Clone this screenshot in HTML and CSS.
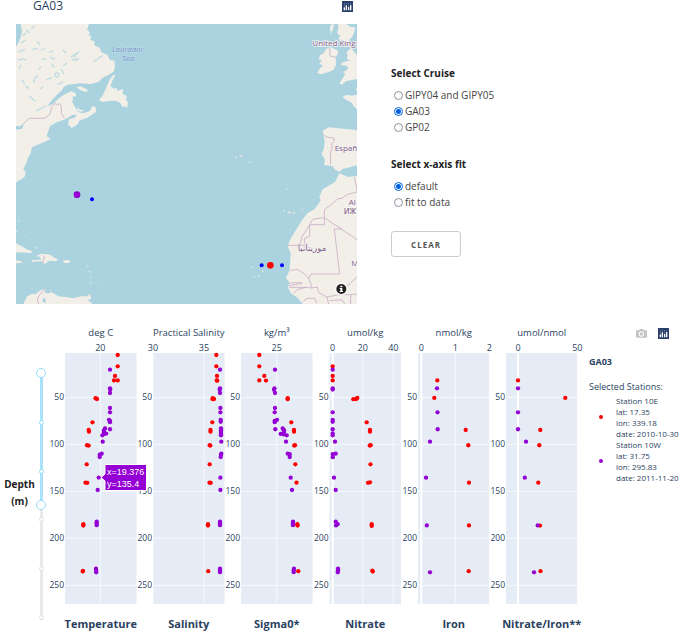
FILE: index.html
```html
<!DOCTYPE html>
<html lang="en">
<head>
<meta charset="utf-8">
<title>GA03</title>
<link rel="stylesheet" href="styles.css">
</head>
<body>
<svg class="defs" aria-hidden="true">
  <symbol id="logo" viewBox="0 0 33 33">
    <rect width="33" height="33" rx="1" fill="#2a3f6a"/>
    <g fill="#7d9cc4"><circle cx="7" cy="8" r="1.6"/><circle cx="13" cy="8" r="1.6"/><circle cx="19" cy="8" r="1.6"/><circle cx="25" cy="8" r="1.6"/><circle cx="7" cy="14" r="1.6"/><circle cx="19" cy="14" r="1.6"/></g>
    <g fill="#fff"><rect x="5" y="19" width="4" height="9" rx="1"/><rect x="11" y="13" width="4" height="15" rx="1"/><rect x="18" y="18" width="4" height="10" rx="1"/><rect x="24" y="12" width="4" height="16" rx="1"/></g>
  </symbol>
</svg>
<main>
  <section class="top">
    <div class="map-panel">
      <header class="map-head"><h1>GA03</h1><svg class="icon"><use href="#logo"/></svg></header>
      <svg class="map" viewBox="48 72 1023 840" role="img" aria-label="Cruise map">
        <rect x="48" y="72" width="1023" height="840" fill="#aad3df"/>
        <g class="land">
          <path d="M62 72L66 95L60 120L48 140V548L58 541L73 532L77 517L70 506L78 492L84 474L92 460L96 442L110 436L128 428L152 417L140 408L145 393L150 378L170 367L190 360L204 353L218 344L232 345L222 354L207 358L204 373L215 384L232 374L238 362L262 353L275 344L289 335L287 321L276 319L270 333L250 340L236 337L225 322L216 304L229 290L227 279L213 274L194 283L178 294L158 312L142 318L158 298L170 285L185 272L191 261L204 254L240 250L272 252L295 246L310 232L324 226L341 215L345 200L343 182L329 179L323 165L303 156L300 144L282 135L285 125L271 119L274 108L265 106L270 97L261 89L267 72Z"/>
          <path d="M347 224L338 240L331 259L342 266L349 263L353 272L370 267L367 281L381 288L377 299L384 306L381 325L373 317L368 322L361 310L350 303L330 302L308 306L297 301L309 285L318 265L329 239L340 225Z"/>
          <path d="M228 262L241 259L253 264L264 271L258 276L242 271Z"/>
          <path d="M230 320L240 329L254 330L244 335L234 332ZM107 740L112 743L107 746Z"/>
          <path d="M48 730L60 736L80 748L97 754L92 760L64 757L48 758ZM48 781L64 784L69 788L48 790ZM94 780L124 779L119 770L108 769L124 761L150 764L160 771L175 779L166 784L147 782L134 792L125 784L96 785ZM190 781H207L212 785L206 789H191Z"/>
          <path d="M70 912L80 890L96 881L107 882L121 871L137 867L134 879L146 880L156 877L175 889L202 892L220 895L245 889L266 889L264 882L272 886L273 897L263 900L278 912Z"/>
          <path d="M1014 72L1015 86L1011 98L1020 108L1014 118L1030 121L1047 130L1051 146L1039 156L1043 166L1040 177L1051 181L1039 184L1026 188L1022 195L1041 198L1045 207L1029 217L1036 222L1025 239L1018 252L1027 253L1038 244L1052 241L1071 237V165L1054 145L1050 128L1048 119L1057 110L1064 92L1065 82L1051 81L1040 72ZM992 74L1003 72L998 91L992 102L990 84Z"/>
          <path d="M960 165L971 160L979 146L991 142L1012 150L1015 160L1007 171L1008 194L1001 209L985 216L963 223L952 218L960 205L969 198L958 190L966 181L956 177Z"/>
          <path d="M1071 264L1066 268L1071 271ZM1027 291L1040 284L1054 287L1071 284V328L1062 320L1055 308L1041 301Z"/>
          <path d="M968 392L986 382L1028 386L1071 390V496L1044 503L1030 506L1018 515L1006 510L998 499L972 495L975 479L965 462L972 444L974 423Z"/>
          <path d="M1018 520L1044 531L1071 528V912H909L891 892L873 880L864 864L868 847L858 833L869 811L872 760L863 738L874 712L892 684L904 664L922 640L944 627L962 602L958 591L968 568L1005 546Z"/>
          <g class="isles"><circle cx="56" cy="663" r="3"/><circle cx="50" cy="694" r="3"/><circle cx="69" cy="691" r="2"/><circle cx="80" cy="710" r="2"/><circle cx="96" cy="719" r="2"/><circle cx="127" cy="733" r="2"/><circle cx="263" cy="799" r="3"/><circle cx="268" cy="814" r="3"/><circle cx="273" cy="832" r="3"/><circle cx="272" cy="848" r="3"/><circle cx="293" cy="855" r="2"/><circle cx="153" cy="872" r="3"/><circle cx="708" cy="472" r="3"/><circle cx="722" cy="468" r="4"/><circle cx="749" cy="486" r="3"/><circle cx="863" cy="568" r="3"/><circle cx="852" cy="632" r="3"/><circle cx="868" cy="637" r="5"/><circle cx="882" cy="639" r="4"/><path d="M899 640L904 633L908 626L911 628L905 636Z"/><circle cx="754" cy="801" r="3"/><circle cx="788" cy="813" r="3"/><circle cx="763" cy="830" r="3"/><circle cx="776" cy="828" r="3"/></g>
        </g>
        <g class="water">
          <path d="M48 377L60 379L71 370L67 386L48 389ZM130 892L138 900L136 909L127 906ZM218 288L238 292L242 304L229 316L219 303Z"/>
          <path class="lakes" d="M80 91l8 7M95 84l7-4M65 128l12-8M58 155l16-6M56 180l14-4l8 4M57 207l5-10M98 148l14-3M112 126l8 8M124 150l10-4M149 157l10-4M150 172l14 5M155 192l8 9M117 207l5-6M128 176l9 3M214 170l14-8l10-6M224 174l5-15M216 178l12 3M236 176l-8 5M283 184l16-12l8-4M101 247l4-14l8-6M140 238l14-4M165 222q6-7 11 0q2 10-6 10q-7-3-5-10M184 208l7 12M78 258l8 7M90 290l14 12M67 240l6 10M120 267l8-7M174 253l15-7M110 332l28-14M189 150l8 8M200 190l-9 7M70 106l7-6"/>
        </g>
        <g class="borders">
          <path d="M70 371L88 355H132L149 344L155 321L164 310L170 314L179 311L184 321L184 341L193 354M136 868L120 882L112 897L115 912M127 765L133 772L128 788"/>
          <path d="M989 144L990 168L1008 172M973 406L981 412L1001 414L1003 423L995 430L996 448L991 456L992 494M1066 380L1071 390"/>
          <path d="M1063 532L1071 570V576L1043 583L1026 595L1014 596L995 613L973 629V674H929V708L912 717L917 736H860M929 674L939 657L973 653L1071 719M929 674L906 710L899 736M1026 687H1003L1019 822H933L925 836M1026 687L1014 680M870 811L893 809L910 819L926 834L936 862M867 850L900 847L907 850L867 857M867 862H918L936 864L952 861L956 878L981 891L1016 884L1052 884L1071 882M918 862L893 868L881 880M909 905L921 895H944L950 910M981 891L986 912M1052 884V912M1027 868L1047 853L1071 831M989 902L1026 899L1034 912"/>
        </g>
        <g class="sea-label"><text x="383" y="156">Labrador</text><text x="385" y="184">Sea</text></g>
        <g class="place">
          <text x="937" y="137">United King</text><text x="1004" y="454">Españ</text><text x="893" y="752" class="arabic">موريتانيا</text><text x="1046" y="614">Al</text><text x="1031" y="641" class="tifinagh">ⵍⵣ</text><text x="1054" y="799">M</text>
        </g>
        <g fill="#00f"><circle cx="276" cy="598" r="6"/><circle cx="785" cy="796" r="6"/><circle cx="846" cy="796" r="6"/></g>
        <circle cx="231" cy="584" r="10" fill="#9400d3"/><circle cx="811" cy="796" r="10" fill="red"/>
        <circle cx="1024" cy="867" r="20" fill="#fff" opacity=".6"/><circle cx="1024" cy="867" r="15" fill="#222"/>
        <path d="M1021 857h6v5h-6zM1019 864h8v9h2v3h-10v-3h2v-6h-2z" fill="#fff"/>
      </svg>
    </div>
    <form class="controls">
      <fieldset>
        <legend>Select Cruise</legend>
        <label><input type="radio" name="cruise">GIPY04 and GIPY05</label>
        <label><input type="radio" name="cruise" checked>GA03</label>
        <label><input type="radio" name="cruise">GP02</label>
      </fieldset>
      <fieldset>
        <legend>Select x-axis fit</legend>
        <label><input type="radio" name="fit" checked>default</label>
        <label><input type="radio" name="fit">fit to data</label>
      </fieldset>
      <button type="button">CLEAR</button>
    </form>
  </section>
  <section class="profiles">
    <div class="depth-label" id="depth">Depth<br>(m)</div>
    <div class="slider">
      <div class="rail"><i class="on"></i><i class="on"></i><i class="on"></i><i></i><i></i><i></i></div>
      <input type="range" min="0" max="500" value="0" aria-labelledby="depth">
      <input type="range" min="0" max="500" value="270" aria-labelledby="depth">
    </div>
    <svg class="charts" id="charts" viewBox="92 640 1076 630" role="img" aria-label="Depth profiles"></svg>
    <aside>
      <div class="tools">
        <svg class="icon" viewBox="0 0 33 33"><path d="M2 7h7l3-4h9l3 4h7q2 0 2 2v18q0 2-2 2H2q-2 0-2-2V9q0-2 2-2z" fill="#c4c4c4"/><circle cx="16" cy="18" r="8" fill="#fff"/><circle cx="16" cy="18" r="5" fill="#c4c4c4"/></svg>
        <svg class="icon"><use href="#logo"/></svg>
      </div>
      <h2>GA03</h2>
      <h3>Selected Stations:</h3>
      <ul>
        <li class="east"><span>Station 10E<br>lat: 17.35<br>lon: 339.18<br>date: 2010-10-30</span></li>
        <li class="west"><span>Station 10W<br>lat: 31.75<br>lon: 295.83<br>date: 2011-11-20</span></li>
      </ul>
    </aside>
  </section>
</main>
<script src="charts.js"></script>
</body>
</html>
```
FILE: styles.css
```css
* { box-sizing: border-box; }
body { margin: 0; background: #fff; color: #444; font-family: "Open Sans", "Noto Sans", sans-serif; font-size: 12px; }
.defs { position: absolute; width: 0; height: 0; }
h1, h2, h3, ul, fieldset { margin: 0; padding: 0; border: 0; font-weight: 400; }
.icon { width: 11px; height: 11px; display: block; }
.top { display: grid; grid-template-columns: minmax(0, 341fr) minmax(0, 327fr); padding-left: 16px; }
.map-head { display: flex; justify-content: space-between; height: 24px; padding: 0 4px 0 17px; }
.map-head .icon { margin-top: 1px; }
h1 { font-size: 12px; line-height: 12px; color: #2a3f5f; }
.map { display: block; width: 100%; }
.land { fill: #f2efe9; }
.isles { fill: #d5e0e0; }
.water { fill: #aad3df; }
.lakes { fill: none; stroke: #aad3df; stroke-width: 4; stroke-linecap: round; opacity: .7; }
.borders { fill: none; stroke: #c9adc6; stroke-width: 3; stroke-linejoin: round; opacity: .8; }
.sea-label { font-size: 23px; font-style: italic; fill: #6d8fc7; text-anchor: middle; stroke: #c8dfea; stroke-width: 3; paint-order: stroke; }
.place { font-size: 24px; fill: #806088; stroke: #f6f2f2; stroke-width: 5; paint-order: stroke; font-weight: 500; }
.arabic { font-family: "DejaVu Sans", sans-serif; font-size: 26px; direction: ltr; }
.tifinagh { font-family: "DejaVu Sans", sans-serif; }
.controls { padding: 65px 0 0 34px; }
fieldset { margin-bottom: 21px; min-width: 0; }
legend { padding: 0; margin-bottom: 6px; font-size: 10px; line-height: 16px; font-weight: 700; color: #222; }
label { display: flex; align-items: center; gap: 2px; padding-left: 3px; line-height: 16px; font-size: 10px; }
input[type=radio] { appearance: none; flex: none; width: 9px; height: 9px; margin: 0; border: 1px solid #8f8f9d; border-radius: 50%; background: #fff; }
input[type=radio]:checked { border-color: #0060df; background: radial-gradient(#0060df 0 2px, #fff 3px); }
button { display: block; width: 70px; height: 26px; padding: 0; border: 1px solid #ccc; border-radius: 3px; background: #fff; color: #555; font: 700 8px "Open Sans", sans-serif; letter-spacing: 1px; }
.profiles { display: grid; grid-template-columns: 36px 10px minmax(0, 1fr) 100px; margin-top: 16px; }
.depth-label { margin-top: 156px; padding-left: 3px; text-align: center; font-size: 10px; line-height: 17px; font-weight: 700; color: #222; }
.slider { display: grid; grid-template-columns: 10px; height: 255px; margin-top: 48px; }
.slider > * { grid-area: 1 / 1; }
.rail { display: flex; flex-direction: column; align-items: center; justify-content: space-between; margin: 3px 0; background: linear-gradient(#abe2fb 54%, #e9e9e9 54%) center / 3px 100% no-repeat; }
.rail i { width: 5px; height: 5px; border: 1px solid #e0e0e0; border-radius: 50%; background: #fff; }
.rail .on { border-color: #96dbfa; }
input[type=range] { appearance: none; writing-mode: vertical-lr; width: 10px; height: 255px; margin: 0; background: none; pointer-events: none; }
input[type=range]::-webkit-slider-thumb { appearance: none; width: 10px; height: 10px; border: 1px solid #96dbfa; border-radius: 50%; background: #fff; pointer-events: auto; }
.charts { display: block; width: 100%; fill: #2a3f5f; }
.plot { fill: #e5ecf6; }
.grid { stroke: #fff; stroke-width: 2; opacity: .7; }
.zero { stroke: #fff; stroke-width: 4; }
.unit { font-size: 19px; text-anchor: middle; }
.tick { font-size: 18px; text-anchor: middle; }
.depth-tick { font-size: 17px; text-anchor: end; }
.name { font-size: 22px; font-weight: 700; text-anchor: middle; }
.tip { fill: #9400d3; stroke: #fff; stroke-width: 2; }
.tip-text { fill: #fff; font: 18px "Liberation Sans", Arial, sans-serif; }
aside { padding: 8px 0 0 5px; color: #2a3f5f; }
.tools { display: flex; justify-content: flex-end; gap: 11px; padding-right: 15px; }
h2 { margin-top: 16px; font-size: 9px; line-height: 14px; font-weight: 700; }
h3 { margin-top: 11px; font-size: 9px; line-height: 14px; white-space: nowrap; }
ul { list-style: none; font-size: 8px; line-height: 11px; margin-top: 1px; }
li { display: flex; align-items: center; gap: 13px; padding-left: 10px; white-space: nowrap; }
li::before { content: ""; width: 4px; height: 4px; border-radius: 50%; background: red; }
.west::before { background: #9400d3; }
```
FILE: charts.js
```js
// Each profile: left edge, unit, name, ticks [x, label, zero line], then x/depth pairs per station.
const profiles = [
  { left: 65, unit: 'deg C', name: 'Temperature', ticks: [[100.3, '20']],
    east: [117.7,5,117.7,17,115,27.3,114,32,117.7,32,95.5,51,97,51.8,92.5,76.6,88.7,84.8,89,86.6,87,101,88.7,101.4,86.7,121.3,85.5,140.8,87.3,141,83.3,185,83.3,186.5,82.7,235.2,83,234.6],
    west: [110,20.6,110,40.4,110.2,41.8,110,45.4,110,61.4,110,66,109,74,110,75,110,76.5,110,84,105,83.1,103.8,85.5,104,87.5,106.2,88.6,104.3,89,102.3,90.4,102.7,97.2,101.7,110,99.7,111,99.7,113.5,98.7,135.4,97.7,148.6,96.7,182.3,96.7,184,96.7,186,96,232.3,96.2,234.5,96.2,236.1] },
  { left: 153, unit: 'Practical Salinity', name: 'Salinity', ticks: [[153, '30'], [204, '35']],
    east: [216.3,5,216.3,17,217,27.3,216.7,32,217.3,32.3,212.7,51,212.7,52,214,51.8,212.3,76.6,210.5,84.8,210.5,86.6,209.7,101,210.3,101.4,209.7,121.3,209.5,140.8,210.7,141,208,185,208,186.5,208.2,235],
    west: [220,20.6,220,40.4,219.7,42,220,45.4,220.4,61.4,220.4,66,220.7,74,220.7,76,221,83,221,85,221,87,221,88.5,221,90.4,221.3,97.2,221.3,110,221,111,220.7,113.5,220.4,135.5,220.4,148.6,220,182.3,220,184,220,186,220,232.3,220,234,220,236] },
  { left: 241, unit: 'kg/m³', name: 'Sigma0*', ticks: [[276.7, '25']],
    east: [259.3,5,259.3,17,264.3,27.3,259.3,32,266,32.2,287.7,51,287.7,52,291.3,76.6,294,84.8,294,86.6,294.2,101.4,295,101,295.3,121.3,296.5,140.8,297.3,185,297.6,186.5,298.3,235],
    west: [275,20.6,274.5,40.4,274,42,275,45.4,275,61.4,274.7,66,277,74,274.7,75,274.7,76.5,275.3,84,282.7,83.1,284,85,284,87,280.7,89,283.7,89.5,286.7,90.4,286,97.2,287.7,110,289.7,110.5,289.7,113.5,290.7,135.5,292,148.6,293,182.3,293,184,293,186,294,232.3,293.7,234,293.7,236] },
  { left: 329.5, unit: 'umol/kg', name: 'Nitrate', ticks: [[332.7, '0', 1], [362.7, '20'], [393.3, '40']],
    east: [332.7,17,332.7,27.3,332.7,32,353.3,52,356,52,357.3,50.7,366.7,76.6,370,84.8,370,86.6,369.7,101.4,370.7,101,370.5,121.3,368,141,370,140.5,371.7,185,371.7,186.8,372.3,234.5,372.8,235.4],
    west: [332.7,20.6,332.7,40.4,332.7,41.8,332.7,66,332.7,74,332.7,76,332.7,84,332.7,88.5,332.7,90.5,335,97.2,335.7,110,332.8,110.5,332.8,113.7,334,135.5,335.7,148.6,335.7,182.3,337.7,185,336,186.3,338,232.3,338,234,337.8,236.2] },
  { left: 418, unit: 'nmol/kg', name: 'Iron', ticks: [[421.3, '0', 1], [455.3, '1'], [489.3, '2']],
    east: [437.3,32,434.3,50.7,465.7,84.8,468.3,101,469,140.8,469,186.3,468.7,235],
    west: [437,40.4,437.5,66,437.7,84,430,97.2,426,135.5,426.8,186.3,430,236.2] },
  { left: 506, unit: 'umol/nmol', name: 'Nitrate/Iron**', ticks: [[518, '0', 1], [577.3, '50']],
    east: [518,32,565.3,50.7,540.3,84.8,539.3,101,538.3,140.8,540,186.5,540.5,235],
    west: [518,40.4,518,66,518,84,526,97.2,524.8,135.5,537.7,186.3,534,236.2] }
];
// The viewBox holds two units per data-table unit.
const S = 2;
const top0 = 353 * S, height = 251 * S, width = 143;
const y = depth => (350.3 + depth * 0.94) * S;
const dots = (list, color) => {
  let out = '';
  for (let i = 0; i < list.length; i += 2) {
    out += `<circle cx="${list[i] * S}" cy="${y(list[i + 1])}" r="4.3" fill="${color}"/>`;
  }
  return out;
};
let svg = '';
for (const p of profiles) {
  const left = p.left * S, mid = left + width / 2;
  svg += `<rect class="plot" x="${left}" y="${top0}" width="${width}" height="${height}"/>`;
  for (const d of [50, 100, 150, 200, 250]) {
    svg += `<path class="grid" d="M${left} ${y(d)}h${width}"/><text class="depth-tick" x="${left - 2}" y="${y(d) + 6}">${d}</text>`;
  }
  for (const [x, label, zero] of p.ticks) {
    svg += `<path class="${zero ? 'zero' : 'grid'}" d="M${x * S} ${top0}v${height}"/><text class="tick" x="${x * S}" y="702">${label}</text>`;
  }
  svg += `<text class="unit" x="${mid}" y="671">${p.unit}</text><text class="name" x="${mid}" y="1256">${p.name}</text>`;
  svg += dots(p.east, 'red') + dots(p.west, '#9400d3');
}
svg += '<path class="tip" d="M202 955L210 948V929H293V981H210V962Z"/><text class="tip-text" x="214" y="950">x=19.376</text><text class="tip-text" x="214" y="973">y=135.4</text>';
document.getElementById('charts').innerHTML = svg;
```
